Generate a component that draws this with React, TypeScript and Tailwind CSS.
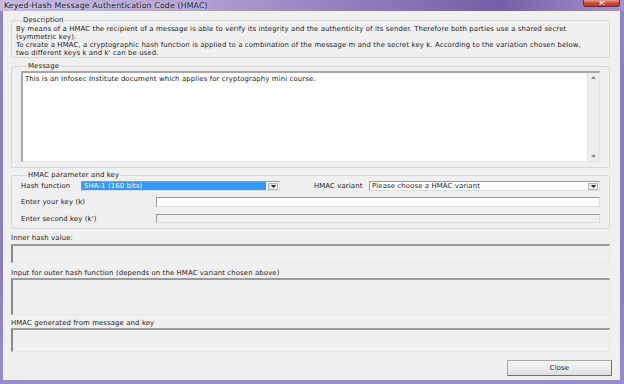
import { ReactNode } from 'react';

const FONT = { fontFamily: '"DejaVu Sans", Verdana, sans-serif' };

// sunken read-only box
const sunken =
  'border-t-2 border-l-2 border-t-[#9c9c9c] border-l-[#8a8a8a] border-r border-b border-r-[#e6e6e6] border-b-[#e6e6e6] bg-[#f0f0f0]';

const editBox =
  'border-t border-l border-t-[#9a9a9a] border-l-[#9a9a9a] border-r border-b border-r-[#dcdcdc] border-b-[#dcdcdc]';

const txt = 'text-[6.9px] leading-[8px] tracking-[0.12px] text-[#1a1a1a] whitespace-nowrap';

function Group({ title, className, children }: { title: string; className?: string; children: ReactNode }) {
  return (
    <fieldset className={`border border-[#d3d9dd] rounded-[2px] ${className ?? ''}`}>
      <legend className={`ml-[6px] px-[1px] ${txt}`}>{title}</legend>
      {children}
    </fieldset>
  );
}

function DropArrow() {
  return (
    <div className="w-[10px] h-[7px] my-auto mr-[1px] bg-[#ececec] border border-[#b8b8b8] flex items-center justify-center">
      <svg width="5" height="3" viewBox="0 0 5 3">
        <path d="M0 0h5L2.5 3z" fill="#222" />
      </svg>
    </div>
  );
}

function Select({ value, selected, className }: { value: string; selected?: boolean; className?: string }) {
  return (
    <div className={`h-[10px] bg-white ${editBox} flex ${className ?? ''}`}>
      <div className={`flex-1 mr-[2px] px-[2px] ${txt} ${selected ? 'bg-[#3399ff] !text-white' : ''}`}>{value}</div>
      <DropArrow />
    </div>
  );
}

function FieldLabel({ children, className }: { children: ReactNode; className?: string }) {
  return <div className={`h-[8px] ${txt} ${className ?? ''}`}>{children}</div>;
}

export default function App() {
  return (
    <div
      className="w-[624px] h-[384px] flex flex-col bg-[linear-gradient(180deg,#9383c2_0%,#8e7cbf_70%,#9a8ccb_100%)] overflow-hidden"
      style={FONT}
    >
      {/* Title bar */}
      <div className="h-[11px] flex items-start bg-[linear-gradient(90deg,#c4b8e2_0%,#b2a2d6_30%,#8a76b8_62%,#735fa5_80%,#a593cf_100%)]">
        <span className="ml-[4px] mt-[1px] text-[7.8px] leading-[9px] tracking-[0.15px] text-[#141414] whitespace-nowrap [text-shadow:0_0_3px_#f4efff]">
          Keyed-Hash Message Authentication Code (HMAC)
        </span>
        <div className="ml-auto mr-[4px] w-[37px] h-[7px] rounded-b-[3px] bg-[linear-gradient(180deg,#e7a092_0%,#c9452f_55%,#b93a22_100%)] border border-t-0 border-[#7a2a1e] flex items-center justify-center">
          <svg width="6" height="4" viewBox="0 0 6 4">
            <path d="M0.5 0.3L5.5 3.7M5.5 0.3L0.5 3.7" stroke="#fff" strokeWidth="1.2" />
          </svg>
        </div>
      </div>

      {/* Client area */}
      <div className="flex-1 ml-[3px] mr-[4px] mb-[4px] bg-[#f0f0f0] pl-[8px] pr-[10px] pt-[5px] flex flex-col">
        {/* Description */}
        <Group title="Description" className="h-[42px] pl-[4px] pt-[1px]">
          <div className={txt}>
            <p>
              By means of a HMAC the recipient of a message is able to verify its integrity and the authenticity of its sender. Therefore both parties use a shared secret
            </p>
            <p>(symmetric key).</p>
            <p>
              To create a HMAC, a cryptographic hash function is applied to a combination of the message m and the secret key k. According to the variation chosen below,
            </p>
            <p>two different keys k and k' can be used.</p>
          </div>
        </Group>

        {/* Message */}
        <Group title="Message" className="mt-[4px] h-[106px] pl-[9px] pr-[9px] pt-[1px]">
          <div className="h-[91px] bg-white border-t-2 border-l-2 border-t-[#a8a8a8] border-l-[#a8a8a8] border-r border-b border-r-[#e3e3e3] border-b-[#e3e3e3] flex">
            <div className={`flex-1 pl-[2px] pt-[2px] ${txt}`}>
              This is an Infosec Institute document which applies for cryptography mini course.
            </div>
            <div className="w-[12px] bg-[#eeeeee] border-l border-[#e2e2e2] flex flex-col items-center justify-between py-[3px]">
              <svg width="5" height="3" viewBox="0 0 5 3">
                <path d="M0 3h5L2.5 0z" fill="#8a8a8a" />
              </svg>
              <svg width="5" height="3" viewBox="0 0 5 3">
                <path d="M0 0h5L2.5 3z" fill="#8a8a8a" />
              </svg>
            </div>
          </div>
        </Group>

        {/* HMAC parameter and key */}
        <Group title="HMAC parameter and key" className="mt-[3px] h-[58px] pl-[9px] pr-[9px] pt-[2px]">
          <div className="flex items-center h-[10px]">
            <FieldLabel className="w-[60px]">Hash function</FieldLabel>
            <Select value="SHA-1 (160 bits)" selected className="w-[199px]" />
            <FieldLabel className="ml-[34px] w-[55px]">HMAC variant</FieldLabel>
            <Select value="Please choose a HMAC variant" className="flex-1" />
          </div>
          <div className="flex items-center h-[10px] mt-[6px]">
            <FieldLabel className="w-[135px]">Enter your key (k)</FieldLabel>
            <div className={`flex-1 h-[10px] bg-white ${editBox}`} />
          </div>
          <div className="flex items-center h-[9px] mt-[7px]">
            <FieldLabel className="w-[135px]">Enter second key (k')</FieldLabel>
            <div className={`flex-1 h-[9px] bg-[#f0f0f0] ${editBox}`} />
          </div>
        </Group>

        {/* Outputs */}
        <FieldLabel className="mt-[5px]">Inner hash value:</FieldLabel>
        <div className={`mt-[2px] h-[19px] ${sunken}`} />

        <FieldLabel className="mt-[6px]">Input for outer hash function (depends on the HMAC variant chosen above)</FieldLabel>
        <div className={`mt-[1px] h-[37px] ${sunken}`} />

        <FieldLabel className="mt-[4px]">HMAC generated from message and key</FieldLabel>
        <div className={`mt-[1px] h-[24px] ${sunken}`} />

        <div className="mt-[8px] flex justify-end -mr-[2px]">
          <button className={`w-[105px] h-[16px] bg-[linear-gradient(180deg,#f6f6f6_0%,#ebebeb_50%,#dedede_100%)] border border-[#a9a9a9] border-r-[#6f6f6f] border-b-[#6f6f6f] ${txt}`}>
            Close
          </button>
        </div>
      </div>
    </div>
  );
}
